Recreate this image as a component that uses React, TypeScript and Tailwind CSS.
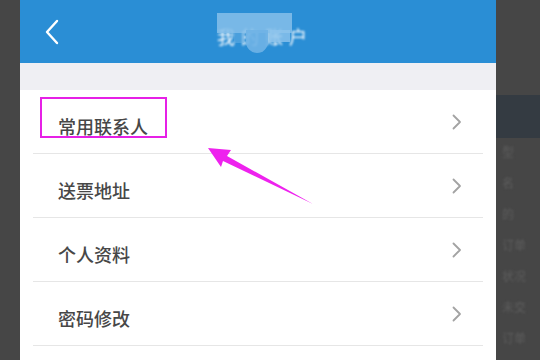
import React from 'react';

const items = ['常用联系人', '送票地址', '个人资料', '密码修改'];
const sideBits = ['型', '名', '的', '订单', '状况', '未交', '订单'];

const Chevron = () => (
  <svg width="12" height="16" viewBox="0 0 12 16" fill="none">
    <path d="M2.5 1.5 L9 8 L2.5 14.5" stroke="#a3a3a3" strokeWidth="1.8" strokeLinecap="round" strokeLinejoin="round" />
  </svg>
);

export default function App() {
  return (
    <div className="flex w-[540px] h-[360px] overflow-hidden bg-[#464646] font-['Noto_Sans_CJK_SC','Noto_Sans',sans-serif]">
      <div className="w-[20px] shrink-0" />

      <div className="relative w-[476px] shrink-0 flex flex-col bg-white">
        {/* header */}
        <div className="relative h-[63px] shrink-0 bg-[#2a8ed5] flex items-center">
          <svg className="ml-[24px]" width="16" height="26" viewBox="0 0 16 26" fill="none">
            <path d="M13 2 L3 13 L13 24" stroke="#ffffff" strokeWidth="2.4" strokeLinecap="round" strokeLinejoin="round" />
          </svg>
          {/* blurred / pixelated title */}
          <div className="absolute left-[197px] top-[27px] text-white text-[18px] leading-none tracking-[6px] blur-[1px]">我的账户</div>
          <div className="absolute left-[197px] top-[13px] w-[75px] h-[20px] bg-[#86bfea]/85" />
          <div className="absolute left-[226px] top-[30px] w-[22px] h-[23px] rounded-b-full bg-[#6fb2e6]/90" />
          <div className="absolute left-[250px] top-[30px] w-[20px] h-[12px] bg-[#8fc4ec]/80" />
          <div className="absolute left-[214px] top-[33px] w-[10px] h-[10px] bg-[#6aafe4]/50" />
        </div>

        {/* grey band */}
        <div className="h-[27px] shrink-0 bg-[#efeff3]" />

        {/* list */}
        <div className="flex flex-col">
          {items.map((t) => (
            <div key={t} className="mx-[13px] h-[64px] flex items-center justify-between border-b border-[#e6e6e6] pl-[25px] pr-[20px]">
              <span className="pt-[9px] text-[18px] leading-none font-medium text-[#474747]">{t}</span>
              <Chevron />
            </div>
          ))}
        </div>

        {/* highlight box */}
        <div className="absolute left-[20px] top-[97px] w-[127px] h-[41px] border-[2.5px] border-[#e620e6]" />

        {/* arrow */}
        <svg className="absolute left-0 top-0" width="476" height="360" viewBox="0 0 476 360">
          <polygon points="188,148 211,150 207,156 293,204 203,161 201,167" fill="#ee22ee" />
        </svg>
      </div>

      <div className="flex-1 flex flex-col">
        <div className="h-[95px]" />
        <div className="h-[43px] bg-[#343b42]" />
        <div className="flex flex-col pl-[6px] pt-[8px] gap-[19px]">
          {sideBits.map((s, i) => (
            <span key={i} className="text-[12px] leading-none text-[#5e5e5e] blur-[1px]">{s}</span>
          ))}
        </div>
      </div>
    </div>
  );
}
